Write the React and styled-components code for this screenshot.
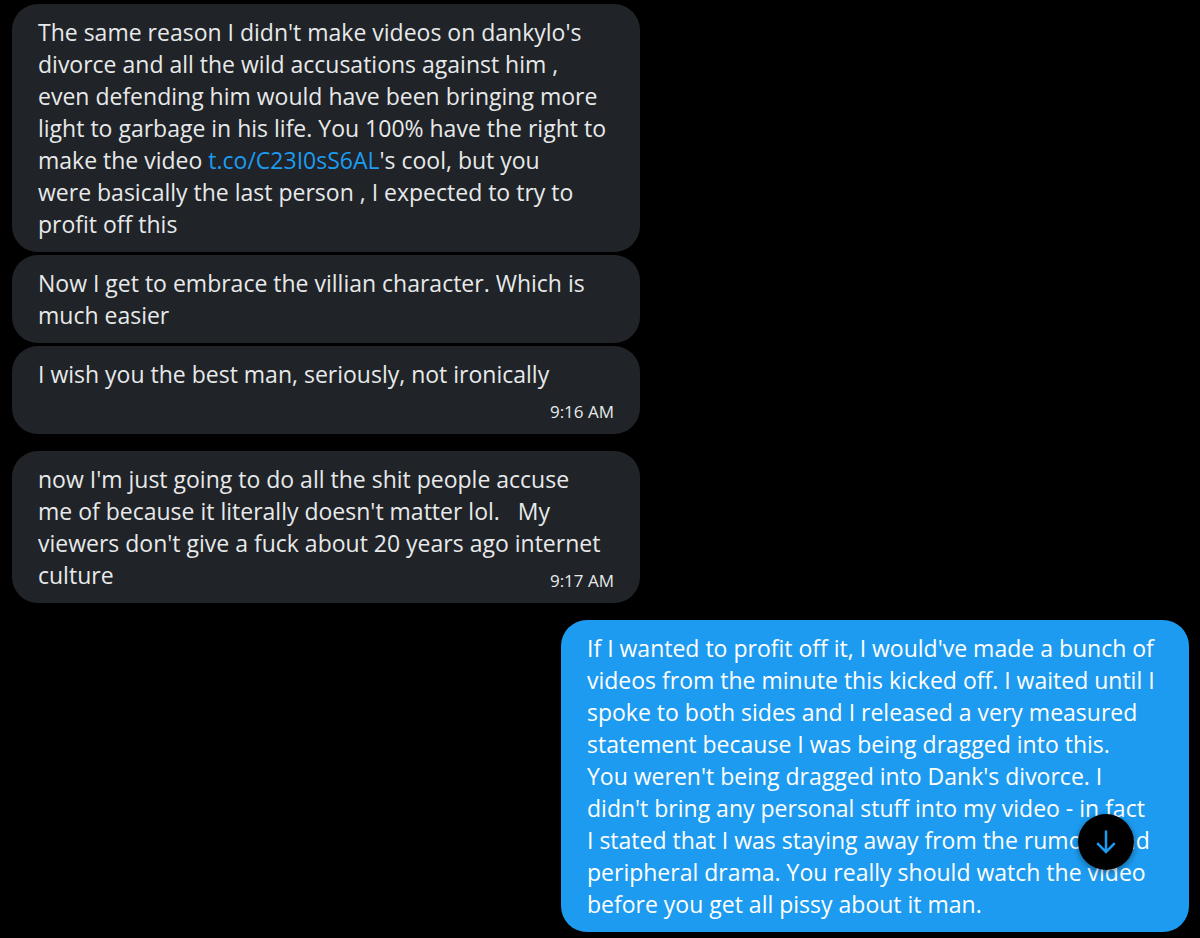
import React from "react";
import styled, { createGlobalStyle } from "styled-components";

const GlobalStyle = createGlobalStyle`
  * {
    box-sizing: border-box;
  }
  body {
    margin: 0;
    background: #000;
    font-family: "Open Sans", "Noto Sans", sans-serif;
  }
`;

const Conversation = styled.main`
  display: flex;
  flex-direction: column;
  gap: 17px;
  padding: 4px 11px 6px 12px;
`;

const Group = styled.section`
  display: flex;
  flex-direction: column;
  align-items: ${props => (props.$sent ? "flex-end" : "flex-start")};
  gap: 3px;
`;

const Bubble = styled.div`
  display: flow-root;
  width: 100%;
  max-width: 628px;
  padding: 12px 26px;
  border-radius: 26px;
  background: ${props => (props.$sent ? "#1d9bf0" : "#202327")};
  color: ${props => (props.$sent ? "#fff" : "#e7e9ea")};
  font-size: 23px;
  line-height: 32px;
  white-space: pre-wrap;
`;

const Link = styled.a`
  color: #1d9bf0;
  text-decoration: none;
  &:hover {
    text-decoration: underline;
  }
`;

const Time = styled.time`
  float: right;
  margin: 12px 0 0 12px;
  font-size: 17px;
  line-height: 20px;
`;

const ScrollButton = styled.button`
  position: fixed;
  right: 66px;
  bottom: 68px;
  display: flex;
  align-items: center;
  justify-content: center;
  width: 56px;
  height: 56px;
  padding: 0;
  border: 0;
  border-radius: 50%;
  background: #000;
  color: #1d9bf0;
  box-shadow: 0 2px 6px rgba(0, 0, 0, 0.4);
  cursor: pointer;
`;

const groups = [
  {
    messages: [
      {
        text: "The same reason I didn't make videos on dankylo's\ndivorce and all the wild accusations against him ,\neven defending him would have been bringing more\nlight to garbage in his life. You 100% have the right to\nmake the video ",
        link: "t.co/C23I0sS6AL",
        rest: "'s cool, but you\nwere basically the last person , I expected to try to\nprofit off this"
      },
      {
        text: "Now I get to embrace the villian character. Which is\nmuch easier"
      },
      {
        text: "I wish you the best man, seriously, not ironically",
        time: "9:16 AM"
      }
    ]
  },
  {
    messages: [
      {
        text: "now I'm just going to do all the shit people accuse\nme of because it literally doesn't matter lol.   My\nviewers don't give a fuck about 20 years ago internet\nculture",
        time: "9:17 AM"
      }
    ]
  },
  {
    sent: true,
    messages: [
      {
        text: "If I wanted to profit off it, I would've made a bunch of\nvideos from the minute this kicked off. I waited until I\nspoke to both sides and I released a very measured\nstatement because I was being dragged into this.\nYou weren't being dragged into Dank's divorce. I\ndidn't bring any personal stuff into my video - in fact\nI stated that I was staying away from the rumors and\nperipheral drama. You really should watch the video\nbefore you get all pissy about it man."
      }
    ]
  }
];

const Message = ({ message, sent }) => (
  <Bubble $sent={sent}>
    {message.text}
    {message.link && <Link href={`https://${message.link}`}>{message.link}</Link>}
    {message.rest}
    {message.time && <Time>{message.time}</Time>}
  </Bubble>
);

const ArrowDown = () => (
  <svg width="20" height="24" viewBox="0 0 20 24" fill="none" aria-hidden="true">
    <path d="M10 0.500v21.500M1.200 13.200l8.800 8.800 8.800-8.800" stroke="currentColor" strokeWidth="2.5" />
  </svg>
);

const App = () => {
  const scrollToBottom = () =>
    window.scrollTo({ top: document.body.scrollHeight, behavior: "smooth" });

  return (
    <>
      <GlobalStyle />
      <Conversation>
        {groups.map((group, i) => (
          <Group key={i} $sent={group.sent}>
            {group.messages.map((message, j) => (
              <Message key={j} message={message} sent={group.sent} />
            ))}
          </Group>
        ))}
      </Conversation>
      <ScrollButton aria-label="Scroll to bottom" onClick={scrollToBottom}>
        <ArrowDown />
      </ScrollButton>
    </>
  );
};

export default App;
